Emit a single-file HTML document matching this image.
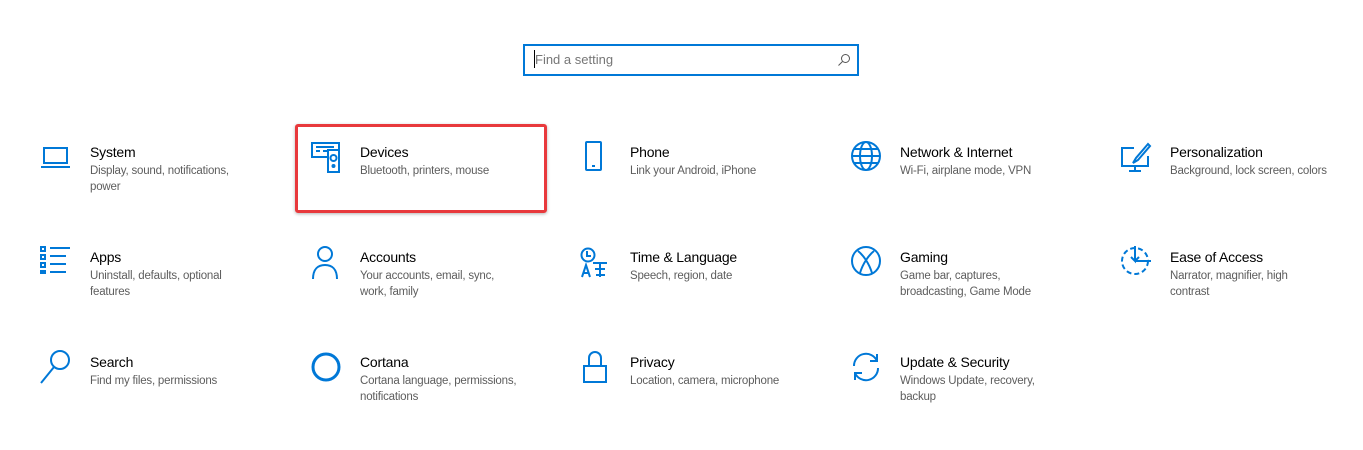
<!DOCTYPE html>
<html><head><meta charset="utf-8"><style>
body{margin:0;width:1363px;height:450px;background:#fff;font-family:"Segoe UI","Liberation Sans",sans-serif;position:relative;overflow:hidden}
.s{position:absolute;left:523px;top:44px;width:332px;height:28px;border:2px solid #0078d7}
.s span{position:absolute;left:10px;top:6px;font-size:13px;color:#767676}
.s i{position:absolute;left:9px;top:4px;width:1px;height:18px;background:#000}
.it{position:absolute;width:260px}
.it svg{position:absolute;left:0;top:1px;overflow:visible}
.t{position:absolute;left:50px;top:1px;font-size:14px;color:#000;white-space:nowrap;letter-spacing:-0.2px}
.d{position:absolute;left:50px;top:20px;font-size:11.5px;line-height:16px;color:#5d5d5d;width:190px;letter-spacing:-0.2px}
.red{position:absolute;left:295px;top:124px;width:246px;height:83px;border:3px solid #e8393c;border-radius:3px;box-shadow:0 1px 3px rgba(0,0,0,.3)}
svg *{stroke:#0078d7;fill:none;stroke-width:2}
</style></head><body>
<div class="s"><i></i><span>Find a setting</span>
<svg width="14" height="14" style="position:absolute;right:6px;top:7px"><circle cx="8.5" cy="5.5" r="4" style="stroke:#555;stroke-width:1"/><path d="M5.5 8.5L1.5 12.5" style="stroke:#555;stroke-width:1"/></svg></div>
<div class="red"></div>

<div class="it" style="left:40px;top:143px"><svg width="32" height="32"><rect x="4" y="4" width="23" height="15"/><path d="M1 23h29"/></svg><div class="t">System</div><div class="d" style="width:165px">Display, sound, notifications, power</div></div>
<div class="it" style="left:310px;top:143px"><svg width="34" height="36"><rect x="2" y="-1" width="27" height="14"/><path d="M6 3h18M6 7h4M13 7h11"/><rect x="18" y="6" width="11" height="22" style="fill:#fff"/><circle cx="23.5" cy="14" r="3"/><circle cx="23.5" cy="22" r="1"/></svg><div class="t">Devices</div><div class="d">Bluetooth, printers, mouse</div></div>
<div class="it" style="left:580px;top:143px"><svg width="32" height="32"><rect x="6" y="-2" width="15" height="28" rx="1"/><path d="M12 22h3"/></svg><div class="t">Phone</div><div class="d">Link your Android, iPhone</div></div>
<div class="it" style="left:850px;top:143px"><svg width="34" height="34"><circle cx="16" cy="12" r="14"/><ellipse cx="16" cy="12" rx="6" ry="14"/><path d="M2 12h28M4 5h24M4 19h24"/></svg><div class="t">Network &amp; Internet</div><div class="d">Wi-Fi, airplane mode, VPN</div></div>
<div class="it" style="left:1120px;top:143px"><svg width="34" height="34"><path d="M14 4H2v18h26V12M15 22v5M9 27h12"/><path d="M28 0L16 14l-3 5 5-3L30 2z"/></svg><div class="t">Personalization</div><div class="d" style="width:200px;white-space:nowrap">Background, lock screen, colors</div></div>

<div class="it" style="left:40px;top:248px"><svg width="32" height="32"><rect x="1" y="-2" width="4" height="4"/><rect x="1" y="6" width="4" height="4"/><rect x="1" y="14" width="4" height="4"/><rect x="1" y="22" width="4" height="2"/><path d="M10 -1h20M10 7h16M10 15h16M10 23h16"/></svg><div class="t">Apps</div><div class="d" style="width:160px">Uninstall, defaults, optional features</div></div>
<div class="it" style="left:310px;top:248px"><svg width="32" height="32"><circle cx="15" cy="5" r="7"/><path d="M3 30c0-10 5-14 12-14s12 4 12 14"/></svg><div class="t">Accounts</div><div class="d" style="width:160px">Your accounts, email, sync, work, family</div></div>
<div class="it" style="left:580px;top:248px"><svg width="34" height="34"><circle cx="8" cy="6" r="6.5"/><path d="M7 2v5h4M2 28l4-12 4 12M3 24h6M13 14h14M20 14v14M15 20h10M16 26h9"/></svg><div class="t">Time &amp; Language</div><div class="d">Speech, region, date</div></div>
<div class="it" style="left:850px;top:248px"><svg width="34" height="34"><circle cx="16" cy="12" r="14"/><path d="M8 2c5 4 11 12 14 22M24 2c-5 4-11 12-14 22"/></svg><div class="t">Gaming</div><div class="d" style="width:160px">Game bar, captures, broadcasting, Game Mode</div></div>
<div class="it" style="left:1120px;top:248px"><svg width="34" height="34"><circle cx="15" cy="12" r="13" style="stroke-dasharray:5 3"/><path d="M15 -3v15l-4-4M15 12l4-4M15 12h16"/></svg><div class="t">Ease of Access</div><div class="d" style="width:150px">Narrator, magnifier, high contrast</div></div>

<div class="it" style="left:40px;top:353px"><svg width="32" height="32"><circle cx="20" cy="6" r="9"/><path d="M14 13L1 29"/></svg><div class="t">Search</div><div class="d">Find my files, permissions</div></div>
<div class="it" style="left:310px;top:353px"><svg width="32" height="32"><circle cx="16" cy="13" r="13" style="stroke-width:3"/></svg><div class="t">Cortana</div><div class="d" style="width:175px">Cortana language, permissions, notifications</div></div>
<div class="it" style="left:580px;top:353px"><svg width="32" height="32"><path d="M9 12V4a6 6 0 0 1 12 0v8"/><rect x="4" y="12" width="22" height="16"/></svg><div class="t">Privacy</div><div class="d">Location, camera, microphone</div></div>
<div class="it" style="left:850px;top:353px"><svg width="34" height="34"><path d="M4 12A12 12 0 0 1 27 7M28 14A12 12 0 0 1 5 19M27 0v7h-7M5 26v-7h7"/></svg><div class="t">Update &amp; Security</div><div class="d" style="width:165px">Windows Update, recovery, backup</div></div>
</body></html>
